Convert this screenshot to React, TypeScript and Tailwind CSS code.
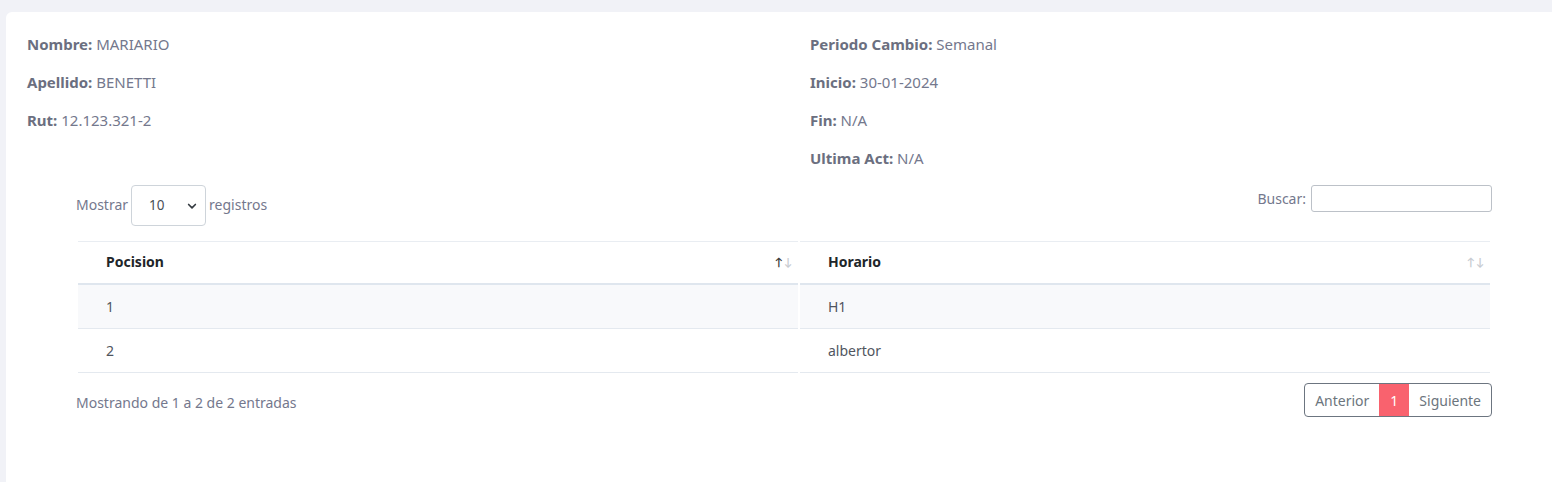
import React from "react";

function SortIcon({ active }: { active: boolean }) {
  return (
    <span className="flex items-center gap-[1px] text-[11px] leading-none">
      <span className={active ? "text-[#3a3a3a]" : "text-[#c8ccd2]"}>↑</span>
      <span className="text-[#c8ccd2]">↓</span>
    </span>
  );
}

function Field({ label, value }: { label: string; value: string }) {
  return (
    <p className="mb-4 leading-[22px] text-[15px] text-[#74788d]">
      <span className="font-bold text-[#6b6f80]">{label}</span> {value}
    </p>
  );
}

export default function App() {
  return (
    <div
      className="h-[482px] bg-[#f1f2f7] pt-3 pl-[6px] overflow-hidden"
      style={{ fontFamily: "'Noto Sans', Lato, sans-serif" }}
    >
      <div className="h-full bg-white rounded-tl-md pt-[21px] pl-[21px]">
        <div className="grid grid-cols-[783px_1fr]">
          <div>
            <Field label="Nombre:" value="MARIARIO" />
            <Field label="Apellido:" value="BENETTI" />
            <Field label="Rut:" value="12.123.321-2" />
          </div>
          <div>
            <Field label="Periodo Cambio:" value="Semanal" />
            <Field label="Inicio:" value="30-01-2024" />
            <Field label="Fin:" value="N/A" />
            <Field label="Ultima Act:" value="N/A" />
          </div>
        </div>

        <div className="ml-[49px] w-[1416px] text-[14px] text-[#74788d]">
          <div className="flex justify-between items-start">
            <label className="flex items-end gap-[3px] h-[41px]">
              <span className="leading-[22px] pb-[10px]">Mostrar</span>
              <span className="flex items-center justify-between w-[75px] h-[41px] border border-[#ced4da] rounded-[4px] pl-[17px] pr-[7px] text-[#495057] text-[13.5px]">
                <span>10</span>
                <svg width="12" height="12" viewBox="0 0 16 16" fill="none" stroke="#343a40" strokeWidth="2.2" strokeLinecap="round" strokeLinejoin="round">
                  <path d="M3.5 6l4.5 4.5L12.5 6" />
                </svg>
              </span>
              <span className="leading-[22px] pb-[10px]">registros</span>
            </label>
            <label className="flex items-center gap-[5px]">
              <span>Buscar:</span>
              <span className="block w-[181px] h-[27px] border border-[#bcc1c8] rounded-[3px]" />
            </label>
          </div>

          <table className="w-full mt-[15px] border-separate border-spacing-x-[2px] border-spacing-y-0 text-[14px]">
            <thead>
              <tr>
                <th className="text-left font-bold text-[#212529] border-t border-[#e9edf2] border-b-2 border-b-[#dfe6ee] h-[44px] pl-[28px] pr-[6px] pb-[2px]">
                  <div className="flex justify-between items-center">
                    <span>Pocision</span>
                    <SortIcon active />
                  </div>
                </th>
                <th className="text-left font-bold text-[#212529] border-t border-[#e9edf2] border-b-2 border-b-[#dfe6ee] h-[44px] pl-[28px] pr-[6px] pb-[2px] w-[690px]">
                  <div className="flex justify-between items-center">
                    <span>Horario</span>
                    <SortIcon active={false} />
                  </div>
                </th>
              </tr>
            </thead>
            <tbody className="text-[#50555e]">
              <tr className="bg-[#f8f9fb]">
                <td className="h-[44px] pl-[28px] border-b border-[#e4e9ef]">1</td>
                <td className="h-[44px] pl-[28px] border-b border-[#e4e9ef]">H1</td>
              </tr>
              <tr>
                <td className="h-[44px] pl-[28px] border-b border-[#e4e9ef]">2</td>
                <td className="h-[44px] pl-[28px] border-b border-[#e4e9ef]">albertor</td>
              </tr>
            </tbody>
          </table>

          <div className="flex justify-between items-center mt-[10px]">
            <span className="pt-[4px]">Mostrando de 1 a 2 de 2 entradas</span>
            <div className="flex h-[34px] border border-[#6c7580] rounded-[4px] overflow-hidden text-[#6c757d]">
              <span className="flex items-center px-[10px]">Anterior</span>
              <span className="flex items-center justify-center w-[30px] bg-[#f9626e] text-white">1</span>
              <span className="flex items-center px-[10px]">Siguiente</span>
            </div>
          </div>
        </div>
      </div>
    </div>
  );
}
